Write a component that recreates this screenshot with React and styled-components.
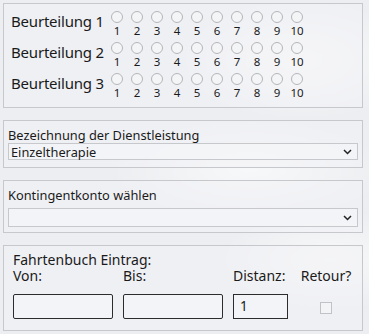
import React from "react";
import styled, { createGlobalStyle } from "styled-components";

const Global = createGlobalStyle`
  html, body { margin: 0; padding: 0; }
  body {
    width: 369px;
    height: 334px;
    overflow: hidden;
    font-family: "Noto Sans", "Open Sans", sans-serif;
    color: #1a1a1a;
    background:
      radial-gradient(ellipse 120px 60px at 300px 60px, rgba(255,255,255,0.7), transparent),
      radial-gradient(ellipse 140px 50px at 250px 170px, rgba(255,255,255,0.6), transparent),
      radial-gradient(ellipse 110px 50px at 330px 260px, rgba(255,255,255,0.6), transparent),
      #eceef1;
  }
`;

const Page = styled.div`
  display: flex;
  flex-direction: column;
  gap: 12px;
  padding: 3px 6px 0 3px;
`;

const Panel = styled.div`
  border: 1px solid #c6c8cb;
  background: rgba(242, 243, 245, 0.55);
  padding: ${(p) => p.$pad || "0"};
  display: flex;
  flex-direction: column;
`;

const RatingRow = styled.div`
  display: flex;
  align-items: flex-start;
  height: 31px;
`;

const RatingLabel = styled.div`
  width: 102px;
  padding-left: 7px;
  box-sizing: border-box;
  white-space: nowrap;
  font-size: 15px;
  letter-spacing: -0.2px;
  line-height: 22px;
  padding-top: 6px;
`;

const RadioGroup = styled.div`
  display: flex;
  padding-top: 7px;
  margin-left: 1px;
`;

const RadioItem = styled.label`
  width: 20px;
  display: flex;
  flex-direction: column;
  align-items: center;
`;

const Circle = styled.span`
  width: 10px;
  height: 10px;
  border-radius: 50%;
  border: 1px solid #b4b6b9;
  background: #f4f5f7;
`;

const Num = styled.span`
  font-size: 11.5px;
  line-height: 13px;
  margin-top: 1px;
`;

const FieldLabel = styled.div`
  font-size: 12.8px;
  line-height: 16px;
`;

const Select = styled.div`
  height: ${(p) => p.$h}px;
  box-sizing: border-box;
  margin-top: ${(p) => p.$mt || 0}px;
  border: 1px solid #c6c8cb;
  background: rgba(245, 246, 248, 0.6);
  display: flex;
  align-items: center;
  justify-content: space-between;
  padding: 0 5px 0 2px;
  font-size: 12.8px;
`;

const FormRow = styled.div`
  display: grid;
  grid-template-columns: 110px 110px 66px 1fr;
`;

const ColLabel = styled.div`
  font-size: 14px;
  line-height: 16px;
  white-space: nowrap;
`;

const Input = styled.div`
  height: 25px;
  margin-top: 10px;
  border: 1px solid #2c2c2c;
  border-radius: ${(p) => (p.$square ? "0" : "2px")};
  width: ${(p) => p.$w || 98}px;
  background: rgba(246, 247, 249, 0.5);
  font-size: 13.5px;
  line-height: 23px;
  padding-left: 6px;
  box-sizing: border-box;
`;

const Col = styled.div`
  display: flex;
  flex-direction: column;
  align-items: ${(p) => (p.$center ? "center" : "flex-start")};
`;

const Check = styled.span`
  width: 12px;
  height: 12px;
  box-sizing: border-box;
  border: 1px solid #c0c2c5;
  margin-top: 18px;
  background: #f3f4f6;
`;

const Chevron = () => (
  <svg width="9" height="6" viewBox="0 0 9 6">
    <path d="M1 1 L4.5 4.5 L8 1" fill="none" stroke="#222" strokeWidth="1.5" />
  </svg>
);

export default function App() {
  const nums = [1, 2, 3, 4, 5, 6, 7, 8, 9, 10];
  return (
    <>
      <Global />
      <Page>
        <Panel $pad="0 0 10px 0">
          {[1, 2, 3].map((r) => (
            <RatingRow key={r}>
              <RatingLabel>Beurteilung {r}</RatingLabel>
              <RadioGroup>
                {nums.map((n) => (
                  <RadioItem key={n}>
                    <Circle />
                    <Num>{n}</Num>
                  </RadioItem>
                ))}
              </RadioGroup>
            </RatingRow>
          ))}
        </Panel>
        <Panel $pad="6px 4px 7px 4px">
          <FieldLabel>Bezeichnung der Dienstleistung</FieldLabel>
          <Select $h={17}>
            <span>Einzeltherapie</span>
            <Chevron />
          </Select>
        </Panel>
        <Panel $pad="6px 4px 5px 4px">
          <FieldLabel>Kontingentkonto wählen</FieldLabel>
          <Select $h={19} $mt={5}>
            <span></span>
            <Chevron />
          </Select>
        </Panel>
        <Panel $pad="6px 9px 11px 9px">
          <ColLabel>Fahrtenbuch Eintrag:</ColLabel>
          <FormRow>
            <Col>
              <ColLabel>Von:</ColLabel>
              <Input $w={100} />
            </Col>
            <Col>
              <ColLabel>Bis:</ColLabel>
              <Input $w={100} />
            </Col>
            <Col>
              <ColLabel>Distanz:</ColLabel>
              <Input $w={55} $square>1</Input>
            </Col>
            <Col $center>
              <ColLabel>Retour?</ColLabel>
              <Check />
            </Col>
          </FormRow>
        </Panel>
      </Page>
    </>
  );
}
